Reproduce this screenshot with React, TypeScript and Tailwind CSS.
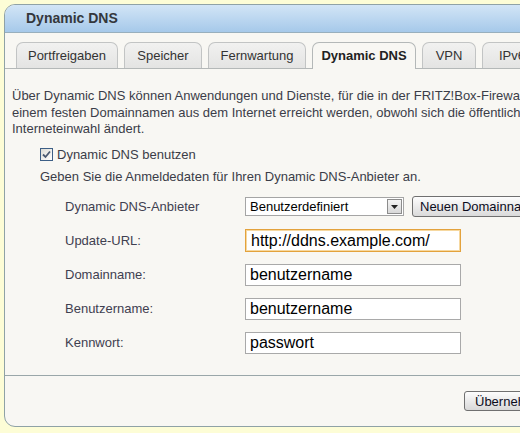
import * as React from "react";

const tabs = [
  { label: "Portfreigaben", w: "w-[102px]" },
  { label: "Speicher", w: "w-[78px]" },
  { label: "Fernwartung", w: "w-[98px]" },
  { label: "Dynamic DNS", w: "w-[104px]", active: true },
  { label: "VPN", w: "w-[54px]" },
  { label: "IPv6", w: "w-[60px]" },
];

function Field({ value, focused }: { value: string; focused?: boolean }) {
  return (
    <div
      className={
        focused
          ? "w-[216px] h-[23px] border border-[#e3a23c] shadow-[inset_0_0_0_1px_#f6d8a0] bg-white flex items-center pl-[5px] text-[16px] text-black"
          : "w-[216px] h-[22px] border border-[#a9a9a9] bg-white flex items-center pl-[4px] text-[16px] text-black"
      }
    >
      {value}
    </div>
  );
}

export default function App() {
  return (
    <div
      className="w-[520px] h-[433px] overflow-hidden bg-[#fdfdd6] pt-[4px] pl-[4px]"
      style={{ fontFamily: '"Liberation Sans", Arial, sans-serif' }}
    >
      <div className="w-[620px] border border-[#8fa2a6] rounded-[11px] overflow-hidden bg-[#f8f7f3]">
        {/* Header */}
        <div className="h-[28px] bg-gradient-to-b from-[#d2e5f6] to-[#a6c9ea] border-b border-[#98afbd] flex items-center pl-[21px]">
          <span className="text-[14px] font-bold text-[#34373c]">Dynamic DNS</span>
        </div>

        {/* Tabs */}
        <div className="mt-[9px] flex items-end gap-[6px] pl-[11px] border-b border-[#b4b8b8] h-[27px]">
          {tabs.map((t) =>
            t.active ? (
              <div
                key={t.label}
                className={`${t.w} h-[27px] -mb-px rounded-t-[7px] border border-b-0 border-[#b4b8b8] bg-[#f8f7f3] flex items-center justify-center text-[13px] font-bold text-[#222]`}
              >
                {t.label}
              </div>
            ) : (
              <div
                key={t.label}
                className={`${t.w} h-[26px] rounded-t-[7px] border border-b-0 border-[#c2c4c4] bg-gradient-to-b from-[#f1f1f0] to-[#e4e4e3] flex items-center justify-center text-[13px] text-[#333]`}
              >
                {t.label}
              </div>
            )
          )}
        </div>

        {/* Description */}
        <p className="mt-[19px] pl-[7px] text-[13px] leading-[16.5px] text-[#3b3d48] whitespace-nowrap">
          Über Dynamic DNS können Anwendungen und Dienste, für die in der FRITZ!Box-Firewall Portfreigaben eingerichtet wurden,
          <br />
          einem festen Domainnamen aus dem Internet erreicht werden, obwohl sich die öffentliche IP-Adresse der FRITZ!Box mit jeder
          <br />
          Interneteinwahl ändert.
        </p>

        {/* Checkbox */}
        <div className="mt-[9px] pl-[35px] h-[16px] flex items-center gap-[4px] text-[13px] text-[#3b3d48]">
          <span className="w-[13px] h-[13px] border border-[#3d5f86] bg-gradient-to-br from-[#dcdcd6] to-white flex items-center justify-center">
            <svg width="9" height="9" viewBox="0 0 9 9">
              <path d="M1 4.5 L3.5 7 L8 1.5" fill="none" stroke="#4a5a72" strokeWidth="1.8" />
            </svg>
          </span>
          <span>Dynamic DNS benutzen</span>
        </div>

        <div className="mt-[6px] pl-[35px] h-[16px] flex items-center text-[13px] text-[#3b3d48] whitespace-nowrap">
          Geben Sie die Anmeldedaten für Ihren Dynamic DNS-Anbieter an.
        </div>

        {/* Form */}
        <div className="mt-[5px] pl-[60px] grid grid-cols-[180px_auto] auto-rows-[34px] items-center text-[13px] text-[#3f4050]">
          <span>Dynamic DNS-Anbieter</span>
          <div className="flex items-center gap-[8px]">
            <div className="w-[159px] h-[19px] border border-[#a5a5a5] bg-white flex items-center justify-between pl-[4px] pr-px text-[13px] text-black">
              <span>Benutzerdefiniert</span>
              <span className="w-[15px] h-[15px] border border-[#8c8c8c] bg-gradient-to-b from-[#f4f4f4] to-[#d8d8d8] flex items-center justify-center">
                <svg width="7" height="4" viewBox="0 0 7 4">
                  <path d="M0 0 H7 L3.5 4 Z" fill="#222" />
                </svg>
              </span>
            </div>
            <button className="h-[21px] px-[7px] border border-[#707070] rounded-[3px] bg-gradient-to-b from-[#fdfdfd] to-[#dadada] text-[13px] text-[#0c0c1c] whitespace-nowrap">
              Neuen Domainnamen anlegen
            </button>
          </div>

          <span>Update-URL:</span>
          <Field value="http://ddns.example.com/" focused />

          <span>Domainname:</span>
          <Field value="benutzername" />

          <span>Benutzername:</span>
          <Field value="benutzername" />

          <span>Kennwort:</span>
          <Field value="passwort" />
        </div>

        {/* Footer */}
        <div className="mt-[15px] border-t border-[#9aa7a9] h-[51px] pt-[13px] pl-[459px]">
          <button className="h-[20px] px-[10px] border border-[#707070] rounded-[3px] bg-gradient-to-b from-[#fdfdfd] to-[#d8d8d8] text-[13px] text-[#0c0c1c] whitespace-nowrap">
            Übernehmen
          </button>
        </div>
      </div>
    </div>
  );
}
